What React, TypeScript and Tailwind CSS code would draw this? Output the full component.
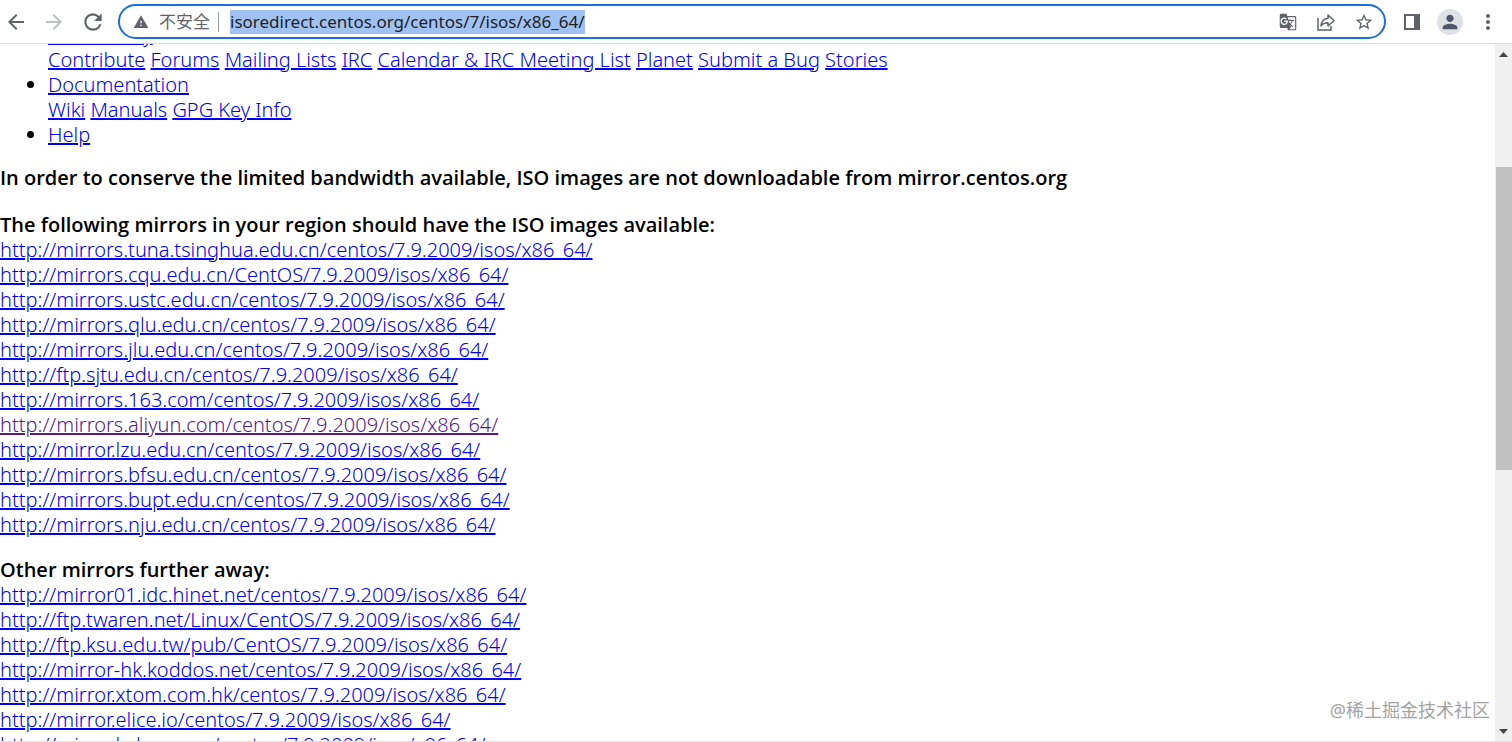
import { MdArrowBack, MdArrowForward, MdGTranslate, MdMoreVert, MdPerson, MdRefresh, MdStarBorder, MdWarning } from 'react-icons/md'

type Mirror = {
  url: string
  visited?: boolean
}

const COMMUNITY_LINKS = [
  'Contribute',
  'Forums',
  'Mailing Lists',
  'IRC',
  'Calendar & IRC Meeting List',
  'Planet',
  'Submit a Bug',
  'Stories',
]

const DOC_LINKS = ['Wiki', 'Manuals', 'GPG Key Info']

const NEAR_MIRRORS: Mirror[] = [
  { url: 'http://mirrors.tuna.tsinghua.edu.cn/centos/7.9.2009/isos/x86_64/' },
  { url: 'http://mirrors.cqu.edu.cn/CentOS/7.9.2009/isos/x86_64/' },
  { url: 'http://mirrors.ustc.edu.cn/centos/7.9.2009/isos/x86_64/' },
  { url: 'http://mirrors.qlu.edu.cn/centos/7.9.2009/isos/x86_64/' },
  { url: 'http://mirrors.jlu.edu.cn/centos/7.9.2009/isos/x86_64/' },
  { url: 'http://ftp.sjtu.edu.cn/centos/7.9.2009/isos/x86_64/' },
  { url: 'http://mirrors.163.com/centos/7.9.2009/isos/x86_64/' },
  { url: 'http://mirrors.aliyun.com/centos/7.9.2009/isos/x86_64/', visited: true },
  { url: 'http://mirror.lzu.edu.cn/centos/7.9.2009/isos/x86_64/' },
  { url: 'http://mirrors.bfsu.edu.cn/centos/7.9.2009/isos/x86_64/' },
  { url: 'http://mirrors.bupt.edu.cn/centos/7.9.2009/isos/x86_64/' },
  { url: 'http://mirrors.nju.edu.cn/centos/7.9.2009/isos/x86_64/' },
]

const FAR_MIRRORS: Mirror[] = [
  { url: 'http://mirror01.idc.hinet.net/centos/7.9.2009/isos/x86_64/' },
  { url: 'http://ftp.twaren.net/Linux/CentOS/7.9.2009/isos/x86_64/' },
  { url: 'http://ftp.ksu.edu.tw/pub/CentOS/7.9.2009/isos/x86_64/' },
  { url: 'http://mirror-hk.koddos.net/centos/7.9.2009/isos/x86_64/' },
  { url: 'http://mirror.xtom.com.hk/centos/7.9.2009/isos/x86_64/' },
  { url: 'http://mirror.elice.io/centos/7.9.2009/isos/x86_64/' },
  { url: 'http://mirror.kakao.com/centos/7.9.2009/isos/x86_64/' },
]

function TextLink({ label, href = '#', visited = false }: { label: string; href?: string; visited?: boolean }) {
  return (
    <a href={href} className={`underline ${visited ? 'text-[#551a8b]' : 'text-[#0000ee]'}`}>
      {label}
    </a>
  )
}

function LinkRow({ labels }: { labels: string[] }) {
  return (
    <div>
      {labels.map((label) => (
        <span key={label}>
          <TextLink label={label} />{' '}
        </span>
      ))}
    </div>
  )
}

function MirrorSection({ title, mirrors }: { title: string; mirrors: Mirror[] }) {
  return (
    <section className="mt-5">
      <h2 className="font-['Open_Sans',sans-serif] font-semibold">{title}</h2>
      {mirrors.map((mirror) => (
        <div key={mirror.url}>
          <TextLink label={mirror.url} href={mirror.url} visited={mirror.visited} />
        </div>
      ))}
    </section>
  )
}

function ShareIcon() {
  return (
    <svg width="20" height="20" viewBox="0 0 20 20" fill="none" stroke="currentColor" strokeWidth="1.5">
      <path d="M2 6v12h13v-4" />
      <path d="M12 3l6 5.500-6 5.500v-3.200c-3.500 0-5.500 1-7 3.200.5-4.500 2.500-7.300 7-7.800z" strokeLinejoin="round" />
    </svg>
  )
}

function SidePanelIcon() {
  return (
    <svg width="18" height="16" viewBox="0 0 18 16">
      <path d="M1 0h16v16H1zM3 2v12h8V2z" fill="currentColor" fillRule="evenodd" />
    </svg>
  )
}

function Toolbar() {
  return (
    <header className="flex h-11 shrink-0 items-center border-b border-[#d9dbd8] bg-white pl-1 pr-3 text-[#5f6368]">
      <div className="flex items-center gap-[14px]">
        <button type="button" aria-label="Back">
          <MdArrowBack size={24} />
        </button>
        <button type="button" aria-label="Forward" className="text-[#bdc0c3]">
          <MdArrowForward size={24} />
        </button>
        <button type="button" aria-label="Reload">
          <MdRefresh size={26} />
        </button>
      </div>

      <div className="ml-3 flex h-[35px] min-w-0 flex-1 items-center rounded-full border-2 border-[#1a6fdc] pl-[13px] pr-[10px]">
        <MdWarning size={16} />
        <label htmlFor="address" className="ml-[10px] border-r border-[#9aa0a6] pr-2 text-[17px] leading-5">
          不安全
        </label>
        <input
          id="address"
          type="text"
          defaultValue="isoredirect.centos.org/centos/7/isos/x86_64/"
          className="ml-[11px] h-6 field-sizing-content bg-[#a0c2f3] text-[17px] text-[#202124] outline-none"
        />
        <div className="ml-auto flex items-center gap-[18px]">
          <button type="button" aria-label="Translate" className="flex w-5 justify-center">
            <MdGTranslate size={18} />
          </button>
          <button type="button" aria-label="Share">
            <ShareIcon />
          </button>
          <button type="button" aria-label="Bookmark">
            <MdStarBorder size={20} />
          </button>
        </div>
      </div>

      <div className="ml-[17px] flex items-center gap-4">
        <button type="button" aria-label="Side panel">
          <SidePanelIcon />
        </button>
        <button
          type="button"
          aria-label="Profile"
          className="flex h-[26px] w-[26px] items-center justify-center rounded-full bg-[#dee1e6] text-[#50566b]"
        >
          <MdPerson size={22} />
        </button>
        <button type="button" aria-label="Menu" className="ml-[-3px]">
          <MdMoreVert size={24} />
        </button>
      </div>
    </header>
  )
}

function Scrollbar() {
  return (
    <div className="flex w-[17px] shrink-0 flex-col bg-[#f0f0f0] text-[#454545]">
      <button type="button" aria-label="Scroll up" className="flex h-5 items-center justify-center">
        <svg width="9" height="5" viewBox="0 0 9 5" fill="currentColor">
          <path d="M0 5L4.500 0 9 5z" />
        </svg>
      </button>
      <div className="flex-[103]" />
      <div className="ml-px flex-[303] bg-[#c1c1c1]" />
      <div className="flex-[251]" />
      <button type="button" aria-label="Scroll down" className="flex h-5 items-center justify-center">
        <svg width="9" height="5" viewBox="0 0 9 5" fill="currentColor">
          <path d="M0 0h9L4.500 5z" />
        </svg>
      </button>
    </div>
  )
}

export default function App() {
  return (
    <div className="relative flex h-screen flex-col overflow-hidden bg-white font-['Noto_Sans','Noto_Sans_CJK_SC',sans-serif]">
      <Toolbar />

      <div className="flex min-h-0 flex-1 border-b border-[#e4e4e4]">
        <main className="min-w-0 flex-1 overflow-hidden font-['Noto_Sans',sans-serif] text-[20px] font-light leading-[25px] text-black">
          {/* scrolled a little past the first menu entry */}
          <ul className="-mt-[22px] list-disc pl-12">
            <li>
              <TextLink label="Community" />
              <LinkRow labels={COMMUNITY_LINKS} />
            </li>
            <li>
              <TextLink label="Documentation" />
              <LinkRow labels={DOC_LINKS} />
            </li>
            <li>
              <TextLink label="Help" />
            </li>
          </ul>

          <p className="mt-[18px] pb-0.5 font-['Open_Sans',sans-serif] font-semibold">
            In order to conserve the limited bandwidth available, ISO images are not downloadable from
            mirror.centos.org
          </p>
          <MirrorSection title="The following mirrors in your region should have the ISO images available:" mirrors={NEAR_MIRRORS} />
          <MirrorSection title="Other mirrors further away:" mirrors={FAR_MIRRORS} />
        </main>
        <Scrollbar />
      </div>

      <div className="pointer-events-none absolute bottom-5 right-[22px] text-[18px] leading-6 text-[#a3a3a3]">
        @稀土掘金技术社区
      </div>
    </div>
  )
}
